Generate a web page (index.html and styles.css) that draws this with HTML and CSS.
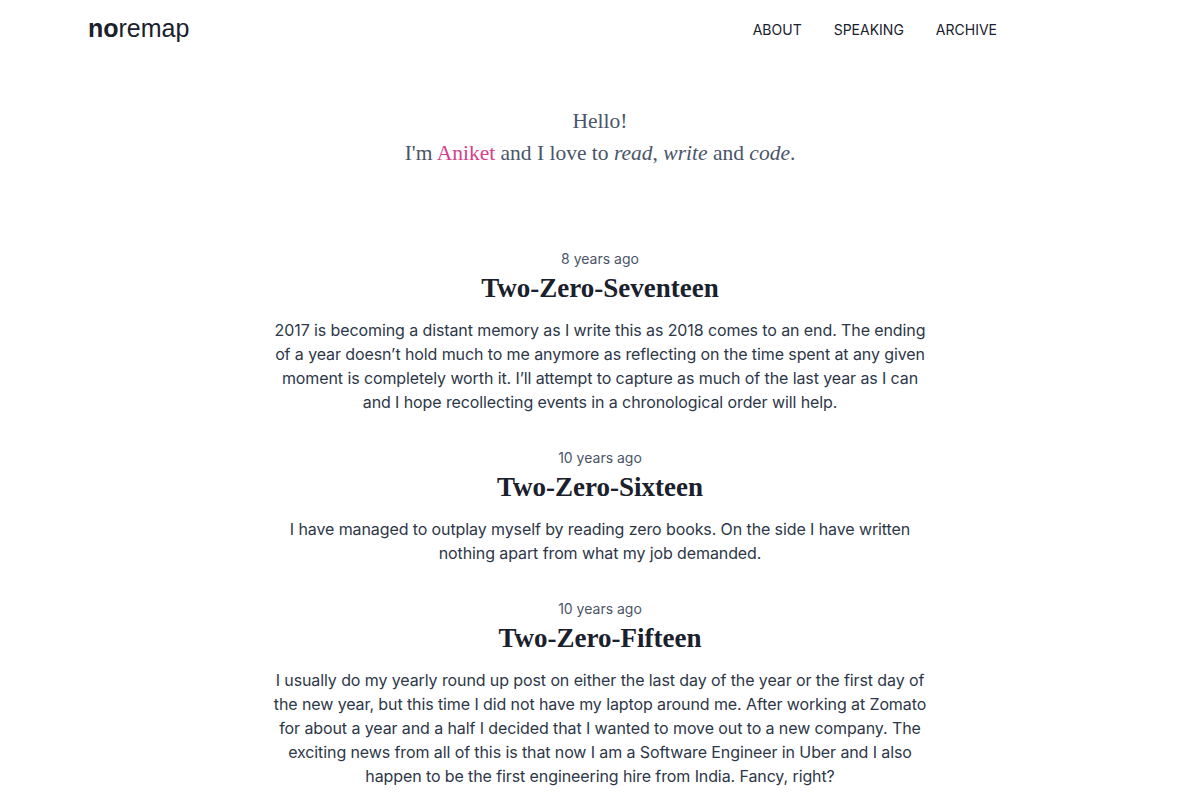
FILE: index.html
```html
<!DOCTYPE html>
<html lang="en">
<head>
  <meta charset="UTF-8" />
  <meta name="viewport" content="width=device-width, initial-scale=1.0"/>
  <title>noremap</title>
  <link rel="stylesheet" href="styles.css">
</head>
<body>

  <!-- Header -->
  <header class="header">
    <a class="logo" href="#"><b>no</b>remap</a>
    <nav class="nav">
      <a href="#">ABOUT</a>
      <a href="#">SPEAKING</a>
      <a href="#">ARCHIVE</a>
    </nav>
  </header>

  <!-- Hero -->
  <section class="hero">
    <p>Hello!</p>
    <p>I'm <span class="name">Aniket</span> and I love to <em>read</em>, <em>write</em> and <em>code</em>.</p>
  </section>

  <!-- Posts -->
  <main class="posts">
    <article class="post">
      <div class="date">8 years ago</div>
      <h2>Two-Zero-Seventeen</h2>
      <p>2017 is becoming a distant memory as I write this as 2018 comes to an end. The ending of a year doesn’t hold much to me anymore as reflecting on the time spent at any given moment is completely worth it. I’ll attempt to capture as much of the last year as I can and I hope recollecting events in a chronological order will help.</p>
    </article>

    <article class="post">
      <div class="date">10 years ago</div>
      <h2>Two-Zero-Sixteen</h2>
      <p>I have managed to outplay myself by reading zero books. On the side I have written nothing apart from what my job demanded.</p>
    </article>

    <article class="post">
      <div class="date">10 years ago</div>
      <h2>Two-Zero-Fifteen</h2>
      <p>I usually do my yearly round up post on either the last day of the year or the first day of the new year, but this time I did not have my laptop around me. After working at Zomato for about a year and a half I decided that I wanted to move out to a new company. The exciting news from all of this is that now I am a Software Engineer in Uber and I also happen to be the first engineering hire from India. Fancy, right?</p>
    </article>
  </main>

</body>
</html>
```

FILE: styles.css
```css
body {
  margin: 0;
  background: #fff;
  font-family: Inter, 'Noto Sans', sans-serif;
  color: #2d3748;
}

a {
  color: inherit;
  text-decoration: none;
}

.header {
  max-width: 1024px;
  margin: 0 auto;
  height: 58px;
  display: flex;
  justify-content: space-between;
  align-items: center;
}

.logo {
  font-family: 'Liberation Sans', Arial, sans-serif;
  font-size: 25px;
  color: #1a202c;
  margin-top: -2px;
}

.nav {
  display: flex;
  gap: 32px;
  margin-right: 115px;
  font-size: 14px;
  color: #1a202c;
}

.hero {
  text-align: center;
  font-family: 'Liberation Serif', 'DejaVu Serif', serif;
  font-size: 21.5px;
  line-height: 32px;
  color: #4a5568;
  padding-top: 47px;
}

.hero p {
  margin: 0;
}

.name {
  color: #d53f8c;
}

.posts {
  width: 658px;
  margin: 0 auto;
  padding-top: 80px;
  text-align: center;
}

.post {
  margin-bottom: 34px;
}

.date {
  font-size: 14px;
  line-height: 20px;
  color: #4a5568;
}

.post h2 {
  font-family: 'Liberation Serif', 'DejaVu Serif', serif;
  font-weight: bold;
  font-size: 27px;
  line-height: 36px;
  margin: 1px 0 12px;
  color: #1a202c;
}

.post p {
  margin: 0;
  font-size: 16px;
  line-height: 24px;
  letter-spacing: -0.1px;
  color: #2d3748;
}
```
